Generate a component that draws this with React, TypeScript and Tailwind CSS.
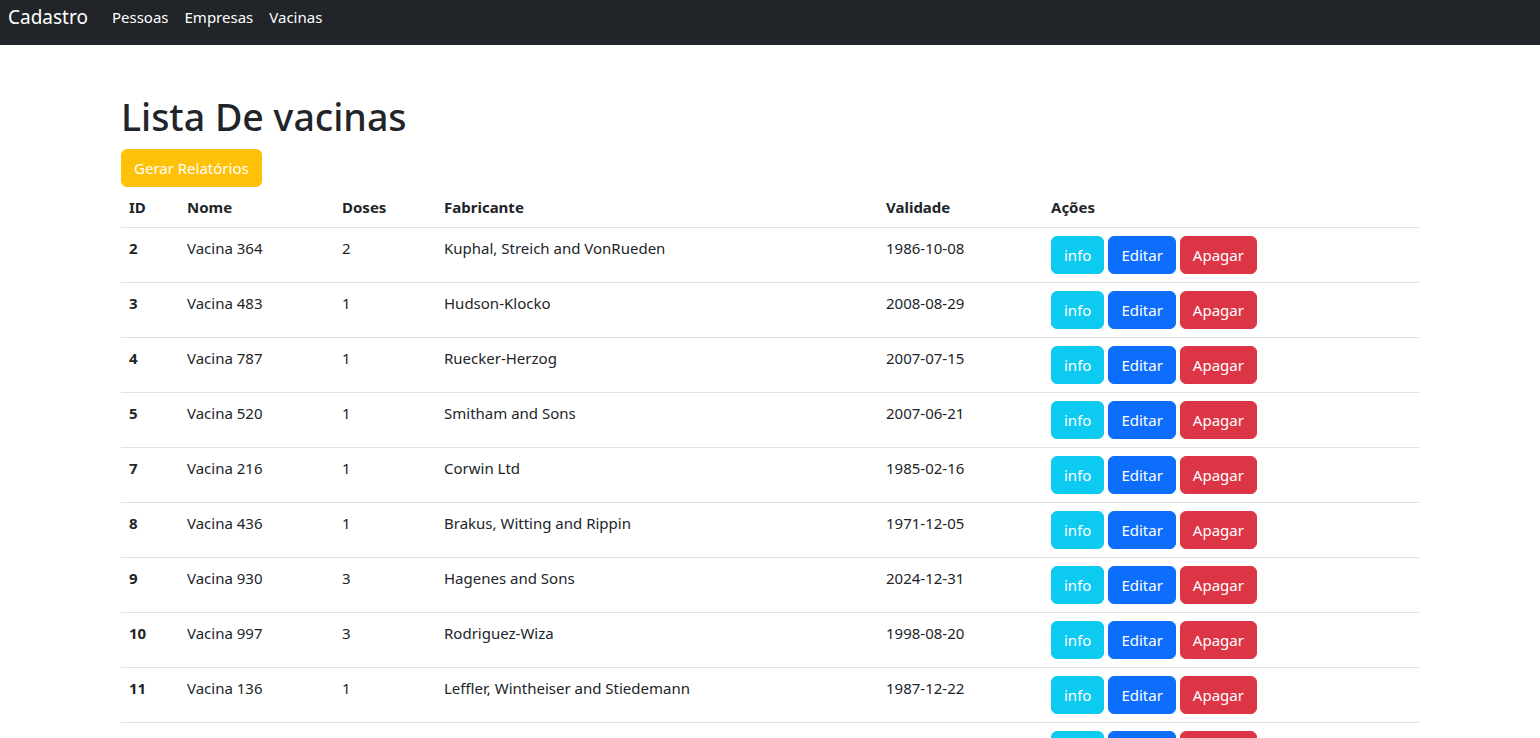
import React from "react";

type Vacina = {
  id: number;
  nome: string;
  doses: number;
  fabricante: string;
  validade: string;
};

const vacinas: Vacina[] = [
  { id: 2, nome: "Vacina 364", doses: 2, fabricante: "Kuphal, Streich and VonRueden", validade: "1986-10-08" },
  { id: 3, nome: "Vacina 483", doses: 1, fabricante: "Hudson-Klocko", validade: "2008-08-29" },
  { id: 4, nome: "Vacina 787", doses: 1, fabricante: "Ruecker-Herzog", validade: "2007-07-15" },
  { id: 5, nome: "Vacina 520", doses: 1, fabricante: "Smitham and Sons", validade: "2007-06-21" },
  { id: 7, nome: "Vacina 216", doses: 1, fabricante: "Corwin Ltd", validade: "1985-02-16" },
  { id: 8, nome: "Vacina 436", doses: 1, fabricante: "Brakus, Witting and Rippin", validade: "1971-12-05" },
  { id: 9, nome: "Vacina 930", doses: 3, fabricante: "Hagenes and Sons", validade: "2024-12-31" },
  { id: 10, nome: "Vacina 997", doses: 3, fabricante: "Rodriguez-Wiza", validade: "1998-08-20" },
  { id: 11, nome: "Vacina 136", doses: 1, fabricante: "Leffler, Wintheiser and Stiedemann", validade: "1987-12-22" },
  { id: 12, nome: "Vacina 718", doses: 2, fabricante: "Schinner, Kuhlman and Lehdil", validade: "1994-03-11" },
];

const btn = "inline-block px-3 py-[6px] text-[15px] leading-6 text-white rounded-[6px] border";

function App() {
  return (
    <div className="min-h-screen bg-white text-[#212529] text-[15px] leading-6 font-['Segoe_UI','Noto_Sans',sans-serif]">
      {/* navbar */}
      <nav className="h-[45px] bg-[#212529] flex items-center pl-2 pb-3">
        <a className="text-[19px] leading-[30px] text-white mr-4">Cadastro</a>
        <ul className="flex">
          {["Pessoas", "Empresas", "Vacinas"].map((l) => (
            <li key={l}>
              <a className="block px-2 leading-6 text-white">{l}</a>
            </li>
          ))}
        </ul>
      </nav>

      <div className="w-[1298px] mx-auto mt-12">
        <h1 className="text-[37.5px] leading-[48px] font-medium mb-2">Lista De vacinas</h1>
        <button className="px-3 py-[6px] text-[15px] leading-6 text-white bg-[#ffc107] border border-[#ffc107] rounded-[6px]">
          Gerar Relatórios
        </button>

        <table className="w-full border-collapse text-left">
          <thead>
            <tr className="border-b border-[#dee2e6]">
              <th className="p-2 w-[58px] font-bold">ID</th>
              <th className="p-2 w-[155px] font-bold">Nome</th>
              <th className="p-2 w-[102px] font-bold">Doses</th>
              <th className="p-2 w-[442px] font-bold">Fabricante</th>
              <th className="p-2 w-[165px] font-bold">Validade</th>
              <th className="p-2 font-bold">Ações</th>
            </tr>
          </thead>
          <tbody>
            {vacinas.map((v) => (
              <tr key={v.id} className="border-b border-[#dee2e6] align-top">
                <td className="p-2 font-bold">{v.id}</td>
                <td className="p-2">{v.nome}</td>
                <td className="p-2">{v.doses}</td>
                <td className="p-2">{v.fabricante}</td>
                <td className="p-2">{v.validade}</td>
                <td className="p-2">
                  <div className="flex gap-1">
                    <button className={`${btn} bg-[#0dcaf0] border-[#0dcaf0]`}>info</button>
                    <button className={`${btn} bg-[#0d6efd] border-[#0d6efd]`}>Editar</button>
                    <button className={`${btn} bg-[#dc3545] border-[#dc3545]`}>Apagar</button>
                  </div>
                </td>
              </tr>
            ))}
          </tbody>
        </table>
      </div>
    </div>
  );
}

export default App;
